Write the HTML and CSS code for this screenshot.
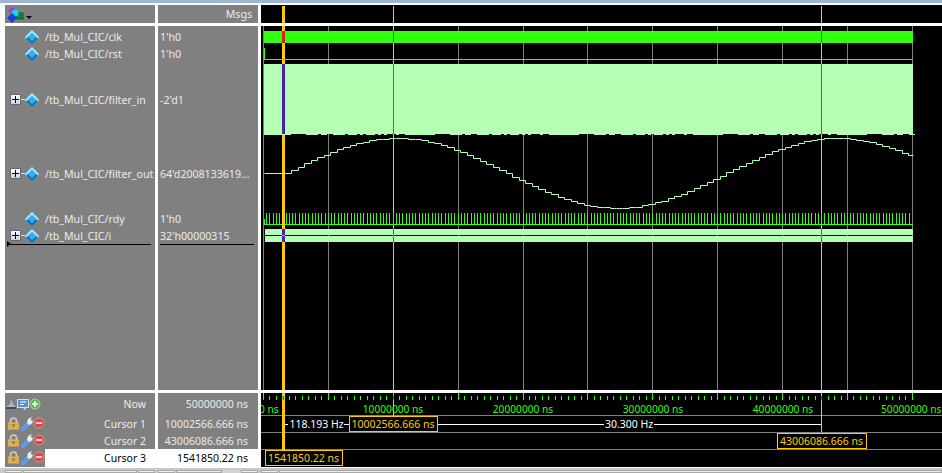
FILE: index.html
```html
<!DOCTYPE html>
<html lang="en">
<head>
    <meta charset="UTF-8">
    <title>Wave</title>
    <link rel="stylesheet" href="styles.css">
</head>
<body>
    <div class="topbar"></div>

    <div class="wave-window">
        <!-- header row -->
        <div class="names head-names">
            <svg class="group-icon" width="17" height="18" viewBox="0 0 17 18">
                <rect x="9" y="8" width="7" height="6" fill="#0c8a3c" stroke="#0a5a30" />
                <path d="M5 2 L9.500 5 L5.500 9 L1 6 Z" fill="#b030d0" />
                <circle cx="8" cy="8" r="3.500" fill="#20d0e8" />
                <path d="M5 8 L10 13 L5 18 L0 13 Z" fill="#1840e0" />
            </svg>
            <span class="drop-arrow"></span>
        </div>
        <div class="values head-msgs">Msgs</div>
        <div class="plot head-plot"><div class="head-cursor c1"></div><div class="head-cursor c2"></div><div class="head-cursor c3"></div></div>

        <!-- signals -->
        <div class="names signal-names">
            <div class="signal row-clk"><span class="diamond"></span><span>/tb_Mul_CIC/clk</span></div>
            <div class="signal row-rst"><span class="diamond"></span><span>/tb_Mul_CIC/rst</span></div>
            <div class="signal row-in"><span class="plus"></span><span class="diamond"></span><span>/tb_Mul_CIC/filter_in</span></div>
            <div class="signal row-out"><span class="plus"></span><span class="diamond"></span><span>/tb_Mul_CIC/filter_out</span></div>
            <div class="signal row-rdy"><span class="diamond"></span><span>/tb_Mul_CIC/rdy</span></div>
            <div class="signal row-i"><span class="plus"></span><span class="diamond"></span><span>/tb_Mul_CIC/i</span></div>
            <div class="end-line names-end"></div>
        </div>
        <div class="values signal-values">
            <div class="signal row-clk">1'h0</div>
            <div class="signal row-rst">1'h0</div>
            <div class="signal row-in">-2'd1</div>
            <div class="signal row-out">64'd2008133619...</div>
            <div class="signal row-rdy">1'h0</div>
            <div class="signal row-i">32'h00000315</div>
            <div class="end-line"></div>
        </div>
        <div class="plot">
            <svg id="waves" width="681" height="364" viewBox="261 26 681 364"></svg>
        </div>

        <!-- cursors -->
        <div class="names cursor-names">
            <div class="cursor-row now-row">
                <span class="tool-icons">
                    <svg width="36" height="14" viewBox="0 0 36 14">
                        <path d="M1 10 L5 7 L6 2 L8 7 L11 10 Z" fill="#a8b4c8" />
                        <path d="M1 11 H11" stroke="#283850" stroke-width="1.500" />
                        <rect x="12.500" y="2.500" width="11" height="8" fill="#5b8fd0" stroke="#d0e0f0" />
                        <path d="M15 5 H21 M15 7.500 H19" stroke="#fff" />
                        <path d="M18 11 L20 13 L21 11 Z" fill="#d0e0f0" />
                        <circle cx="30" cy="7" r="5" fill="#58b858" stroke="#a0d8a0" />
                        <path d="M27 7 H33 M30 4 V10" stroke="#fff" stroke-width="1.500" />
                    </svg>
                </span>
                <span class="cursor-label">Now</span>
            </div>
            <div class="cursor-row">
                <span class="tool-icons"><svg width="40" height="14"><use href="#cursor-tools" /></svg></span>
                <span class="cursor-label">Cursor 1</span>
            </div>
            <div class="cursor-row">
                <span class="tool-icons"><svg width="40" height="14"><use href="#cursor-tools" /></svg></span>
                <span class="cursor-label">Cursor 2</span>
            </div>
            <div class="cursor-row selected">
                <span class="tool-icons"><svg width="40" height="14"><use href="#cursor-tools" /></svg></span>
                <span class="cursor-label">Cursor 3</span>
            </div>
        </div>
        <div class="values cursor-values">
            <div class="cursor-row now-row">50000000 ns</div>
            <div class="cursor-row">10002566.666 ns</div>
            <div class="cursor-row">43006086.666 ns</div>
            <div class="cursor-row selected">1541850.22 ns</div>
        </div>
        <div class="plot">
            <svg id="timeline" width="681" height="74" viewBox="261 393 681 74">
                <text class="tick-label" x="259" y="413">0 ns</text>
                <text class="tick-label" x="393" y="413" text-anchor="middle">10000000 ns</text>
                <text class="tick-label" x="523" y="413" text-anchor="middle">20000000 ns</text>
                <text class="tick-label" x="653" y="413" text-anchor="middle">30000000 ns</text>
                <text class="tick-label" x="783" y="413" text-anchor="middle">40000000 ns</text>
                <text class="tick-label" x="881" y="413">50000000 ns</text>
                <text class="measure" x="289.500" y="428">118.193 Hz</text>
                <text class="measure" x="605" y="428">30.300 Hz</text>
                <text class="cursor-time" x="393" y="428" text-anchor="middle">10002566.666 ns</text>
                <text class="cursor-time" x="821.500" y="445" text-anchor="middle">43006086.666 ns</text>
                <text class="cursor-time" x="303.500" y="462" text-anchor="middle">1541850.22 ns</text>
            </svg>
        </div>
    </div>

    <div class="scrollbars">
        <div class="scroll"><span class="scroll-btn"></span><span class="scroll-track"></span><span class="scroll-btn"></span></div>
        <div class="scroll"><span class="scroll-btn"></span><span class="scroll-track"></span><span class="scroll-hatch"></span><span class="scroll-btn"></span></div>
        <div class="scroll"><span class="scroll-btn"></span><span class="scroll-track"></span></div>
    </div>

    <svg class="defs" width="0" height="0">
        <defs>
            <g id="cursor-tools">
                <path d="M5.500 6 V4 A3 3 0 0 1 11.500 4 V6" fill="none" stroke="#d0d0c0" stroke-width="1.500" />
                <rect x="3" y="5.500" width="11" height="7" fill="#dcb85c" />
                <path d="M3 7.500 H14 M3 10 H14" stroke="#ccA448" />
                <rect x="7.500" y="7.500" width="2" height="2" fill="#806420" />
                <path d="M16 11 L22 5 L25 8 L19 14 L16 14 Z" fill="#5c9cf0" />
                <path d="M22 6 L23 2 L27 0 L25.500 3 L28 4 L26.500 7 L24 8 Z" fill="#e8eef8" />
                <circle cx="34" cy="6" r="5" fill="#d84848" stroke="#e89090" />
                <path d="M31 6 H37" stroke="#fff" stroke-width="1.500" />
            </g>
        </defs>
    </svg>

    <script src="wave.js"></script>
</body>
</html>
```

FILE: styles.css
```css
html, body {
    margin: 0;
    padding: 0;
    background-color: #fff;
    overflow: hidden;
}
body {
    width: 942px;
    height: 473px;
    font-family: "Noto Sans", sans-serif;
    font-size: 10.5px;
    color: #ececec;
}
.defs {
    position: absolute;
}
.topbar {
    height: 3px;
    background-color: #9db6d3;
}
.wave-window {
    display: grid;
    grid-template-columns: 150px 100px 681px;
    grid-template-rows: 18px 364px 74px;
    column-gap: 3px;
    row-gap: 3px;
    margin: 2px 0 0 5px;
    width: 937px;
    background-color: #fff;
}
.names, .values {
    background-color: #808080;
    position: relative;
}
.plot {
    background-color: #000;
    position: relative;
    overflow: hidden;
}
.plot svg {
    display: block;
}
.head-names {
    display: flex;
    align-items: center;
    padding-left: 2px;
}
.drop-arrow {
    width: 0;
    height: 0;
    margin: 6px 0 0 2px;
    border-left: 3px solid transparent;
    border-right: 3px solid transparent;
    border-top: 3px solid #000;
}
.head-msgs {
    text-align: right;
    padding-right: 6px;
    font-size: 10.6px;
    line-height: 18px;
}
.head-cursor {
    position: absolute;
    top: 1px;
    bottom: 0;
    background-color: #ffcc00;
}
.head-cursor.c1 { left: 21px; width: 3px; }
.head-cursor.c2 { left: 132px; width: 1px; }
.head-cursor.c3 { left: 560px; width: 1px; }

.signal {
    position: absolute;
    display: flex;
    align-items: center;
    height: 17px;
    font-size: 10.6px;
    white-space: nowrap;
}
.signal-names .signal { left: 5px; }
.signal-values .signal { left: 2px; }
.row-clk { top: 2px; }
.row-rst { top: 19px; }
.row-in { top: 65px; }
.row-out { top: 139px; }
.row-rdy { top: 184px; }
.row-i { top: 201px; }
.diamond {
    width: 10px;
    height: 10px;
    margin: 0 8px 0 17px;
    transform: rotate(45deg);
    background-color: #2fb0ec;
    box-shadow: inset 2px 2px 0 #a8e4fa, inset -2px -2px 0 #0c70b4;
}
.plus {
    position: relative;
    box-sizing: border-box;
    width: 11px;
    height: 11px;
    margin-right: -11px;
    border: 1px solid #606878;
    border-radius: 1px;
    background-image:
        linear-gradient(#000, #000),
        linear-gradient(#000, #000),
        linear-gradient(#fff, #c8d0e8);
    background-size: 7px 1px, 1px 7px, 100% 100%;
    background-position: center, center, center;
    background-repeat: no-repeat;
}
.plus::after {
    content: "";
    position: absolute;
    left: 10px;
    top: 4px;
    width: 6px;
    height: 1px;
    background-color: #d8d8d8;
}
.end-line {
    position: absolute;
    top: 218px;
    left: 2px;
    width: 94px;
    height: 1px;
    background-color: #000;
}
.names-end {
    left: 3px;
    width: 143px;
}
.names-end::before {
    content: "";
    position: absolute;
    left: -1px;
    top: -3px;
    border-left: 4px solid #000;
    border-top: 3px solid transparent;
    border-bottom: 3px solid transparent;
}

.cursor-row {
    height: 17px;
    line-height: 19px;
    white-space: nowrap;
}
.cursor-row.now-row {
    height: 22px;
    line-height: 22px;
}
.cursor-row.selected {
    height: 18px;
    color: #000;
}
.cursor-names .cursor-row {
    display: flex;
    align-items: center;
}
.tool-icons {
    width: 40px;
    height: 14px;
    flex: none;
}
.tool-icons svg {
    display: block;
}
.cursor-label {
    flex: 1;
    align-self: stretch;
    text-align: right;
    padding-right: 9px;
}
.cursor-values .cursor-row {
    text-align: right;
    padding-right: 10px;
}
.cursor-names .selected .cursor-label,
.cursor-values .selected {
    background-color: #fff;
}
.tick-label {
    font-size: 10.2px;
    fill: #33ff11;
}
.measure {
    font-size: 10.5px;
    fill: #fff;
}
.cursor-time {
    font-size: 10.5px;
    fill: #ffcc00;
}

.scrollbars {
    display: grid;
    grid-template-columns: 150px 100px 681px;
    column-gap: 3px;
    height: 5px;
    margin-top: 1px;
    padding: 0 0 0 5px;
    background-color: #c8c8c8;
}
.scroll {
    display: flex;
    gap: 1px;
    padding-top: 2px;
    overflow: hidden;
}
.scroll-btn {
    width: 15px;
    background-color: #f2f2f2;
    border: 1px solid #a8a8a8;
}
.scroll-track {
    flex: 1;
    background-color: #ececec;
    border: 1px solid #a8a8a8;
}
.scroll-hatch {
    width: 17px;
    background-color: #d4d4d4;
}
```

FILE: wave.js
```js
// builds the traces, grid and cursors from the timing values
const NS = 'http://www.w3.org/2000/svg';
const T0 = 263.4;
const PX_PER_NS = 649 / 50000000;
const LEFT = 264;
const END = 913;

function timeX(ns) {
    return Math.floor(T0 + ns * PX_PER_NS);
}

function add(svg, tag, attrs, first) {
    const el = document.createElementNS(NS, tag);
    for (const key in attrs) {
        el.setAttribute(key, attrs[key]);
    }
    if (first) {
        svg.insertBefore(el, svg.firstChild);
    } else {
        svg.appendChild(el);
    }
    return el;
}

function rect(svg, x, y, w, h, fill, first) {
    return add(svg, 'rect', { x: x, y: y, width: w, height: h, fill: fill }, first);
}

const GREEN = '#33ff11';
const PALE = '#b4ffb4';
const YELLOW = '#ffcc00';
const C1 = timeX(10002566.666);
const C2 = timeX(43006086.666);

function drawWaves() {
    const svg = document.getElementById('waves');

    // grid every 5 us
    for (let i = 0; i <= 10; i++) {
        rect(svg, timeX(i * 5000000), 26, 1, 364, '#808080');
    }

    // cursors behind the traces
    rect(svg, C1, 26, 1, 364, YELLOW);
    rect(svg, C2, 26, 1, 364, YELLOW);
    rect(svg, 282, 26, 3, 364, YELLOW);

    // clk
    rect(svg, LEFT, 31, END - LEFT, 12, GREEN);
    rect(svg, 282, 31, 3, 12, '#cc2a1a');
    rect(svg, C1, 31, 1, 12, '#cc2a1a');
    rect(svg, C2, 31, 1, 12, '#cc2a1a');

    // rst
    rect(svg, LEFT, 48, 1, 12, GREEN);
    rect(svg, LEFT, 59, END - LEFT, 1, GREEN);

    // filter_in, bottom edge is jagged
    rect(svg, LEFT, 64, END - LEFT, 70, PALE);
    let seed = 7;
    for (let x = LEFT; x < END; x += 3) {
        seed = (seed * 31 + 11) % 97;
        if (seed % 3 !== 0) {
            rect(svg, x, 134, 3, 1, PALE);
        }
    }
    rect(svg, 282, 64, 3, 70, '#4a22aa');
    rect(svg, C1, 64, 1, 70, '#3a66b8');
    rect(svg, C2, 64, 1, 70, '#3a66b8');

    // filter_out, 0.5 us per step
    let d = 'M' + LEFT + ' 173';
    const step = 500000 * PX_PER_NS;
    for (let x = 285; x < END; x += step) {
        const y = Math.round(173 - 35 * Math.sin(2 * Math.PI * (x - 285) / 440));
        d += ' H' + Math.round(x) + ' V' + y;
    }
    d += ' H' + END;
    add(svg, 'path', { d: d, fill: 'none', stroke: PALE, 'stroke-width': 1, transform: 'translate(0.5 0.5)' });

    // rdy
    rect(svg, LEFT, 219, 1, 6, GREEN);
    rect(svg, LEFT, 224, END - LEFT, 1, GREEN);
    for (let ns = 250000; ns < 50000000; ns += 250000) {
        rect(svg, timeX(ns), 213, 1, 12, GREEN);
    }
    rect(svg, 282, 213, 3, 12, YELLOW);

    // i
    rect(svg, LEFT + 1, 229, END - LEFT - 1, 6, PALE);
    rect(svg, LEFT + 1, 236, END - LEFT - 1, 6, PALE);
    rect(svg, 282, 229, 3, 6, '#4a22aa');
    rect(svg, 282, 236, 3, 6, '#4a22aa');
    rect(svg, C1, 229, 1, 6, '#3a66b8');
    rect(svg, C1, 236, 1, 6, '#3a66b8');
    rect(svg, C2, 229, 1, 6, '#3a66b8');
    rect(svg, C2, 236, 1, 6, '#3a66b8');
}

function drawTimeline() {
    const svg = document.getElementById('timeline');

    // prepended, so each call lies under the ones before it
    [[349, 416, 88], [777, 433, 89], [265, 450, 77]].forEach(function (b) {
        add(svg, 'rect', { x: b[0] + 0.5, y: b[1] + 0.5, width: b[2], height: 15, fill: '#000', stroke: YELLOW }, true);
    });
    rect(svg, 282, 393, 3, 57, YELLOW, true);
    rect(svg, C1, 393, 1, 31, YELLOW, true);
    rect(svg, C2, 393, 1, 39, YELLOW, true);
    [415, 432, 449].forEach(function (y) {
        rect(svg, 261, y, 681, 1, '#808080', true);
    });

    for (let i = 0; i <= 100; i++) {
        const x = timeX(i * 500000);
        const major = i % 10 === 0;
        rect(svg, x, major ? 393 : 396, 1, major ? 7 : 4, GREEN);
    }
    rect(svg, C1, 396, 1, 4, '#cc2a1a');
    rect(svg, C2, 396, 1, 4, '#cc2a1a');
    rect(svg, 283, 396, 1, 4, '#cc2a1a');

    // measure line between cursors
    rect(svg, 285, 424, 3, 1, '#fff');
    rect(svg, 344, 424, 5, 1, '#fff');
    rect(svg, 438, 424, 166, 1, '#fff');
    rect(svg, 654, 424, 167, 1, '#fff');
}

drawWaves();
drawTimeline();
```
